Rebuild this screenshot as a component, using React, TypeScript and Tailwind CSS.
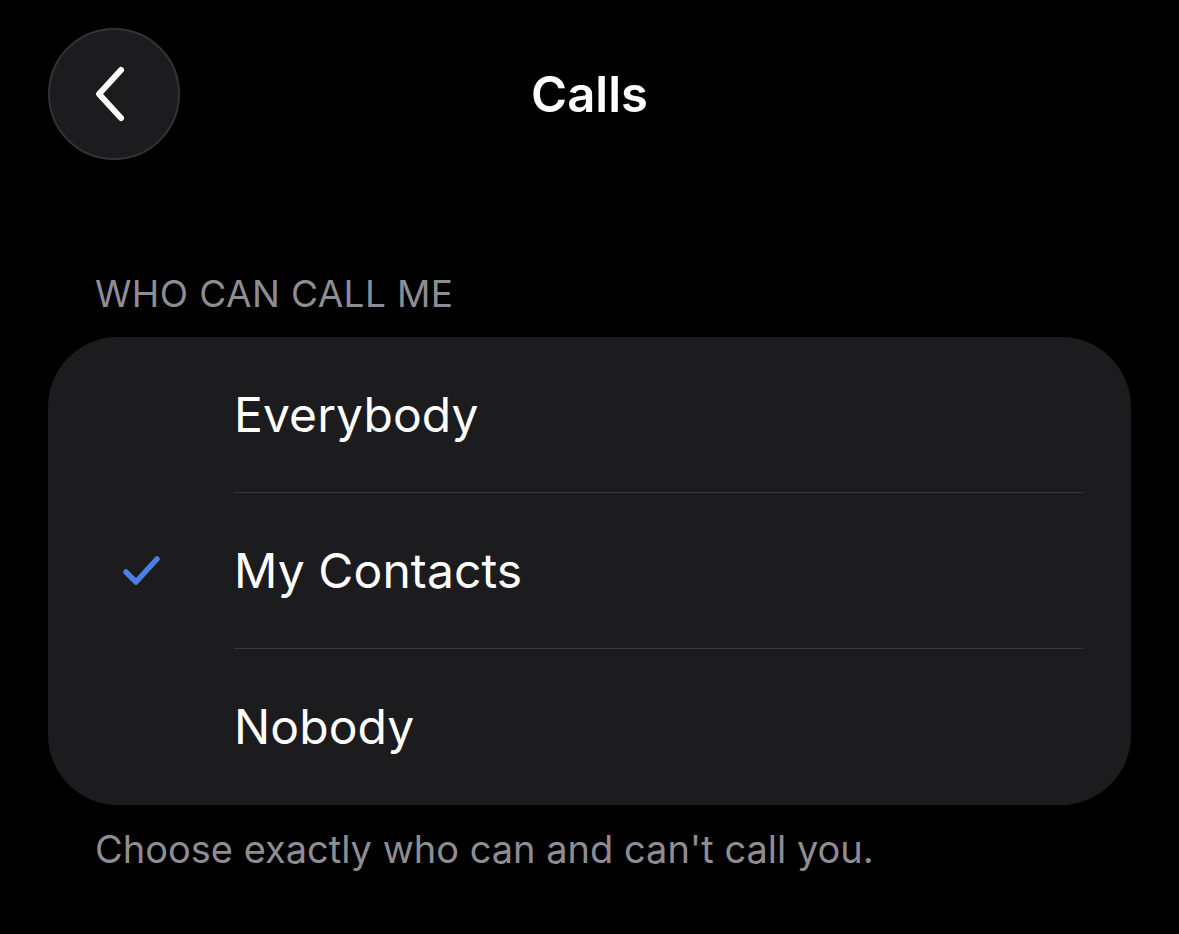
import React from "react";

const font = { fontFamily: "Inter, 'Noto Sans', sans-serif" };

function Row({ label, checked, last }: { label: string; checked?: boolean; last?: boolean }) {
  return (
    <div className="flex h-[156px] items-stretch">
      <div className="flex w-[186px] shrink-0 items-center pl-[74px]">
        {checked && (
          <svg width="40" height="34" viewBox="0 0 40 34" fill="none">
            <path d="M4 18 L14 28 L35 5" stroke="#4a7fe6" strokeWidth="5.5" strokeLinecap="round" strokeLinejoin="round" />
          </svg>
        )}
      </div>
      <div className={`flex flex-1 items-center mr-[48px] ${last ? "" : "border-b border-[#38383a]"}`}>
        <span className="text-[48px] text-white tracking-[0.1px]">{label}</span>
      </div>
    </div>
  );
}

export default function App() {
  return (
    <div className="w-[1179px] h-[934px] bg-black overflow-hidden" style={font}>
      <div className="relative h-[190px] flex items-start">
        <div className="ml-[48px] mt-[28px] flex h-[132px] w-[132px] items-center justify-center rounded-full border-2 border-[#333335] bg-[#1c1c1e]">
          <svg width="40" height="60" viewBox="0 0 40 60" fill="none" className="-ml-[6px]">
            <path d="M30 6 L8 30 L30 54" stroke="white" strokeWidth="6" strokeLinecap="round" strokeLinejoin="round" />
          </svg>
        </div>
        <div className="absolute left-0 right-0 top-[70px] text-center text-[49px] font-semibold text-white leading-none">Calls</div>
      </div>
      <div className="pl-[95px] pt-[85px] pb-[14px] text-[37px] text-[#8d8d93] leading-none tracking-[0.4px]">WHO CAN CALL ME</div>
      <div className="mx-[48px] rounded-[70px] bg-[#1c1c1e] mt-[11px]">
        <Row label="Everybody" />
        <Row label="My Contacts" checked />
        <Row label="Nobody" last />
      </div>
      <div className="pl-[95px] pt-[25px] text-[38px] text-[#8d8d93] leading-none">Choose exactly who can and can't call you.</div>
    </div>
  );
}
